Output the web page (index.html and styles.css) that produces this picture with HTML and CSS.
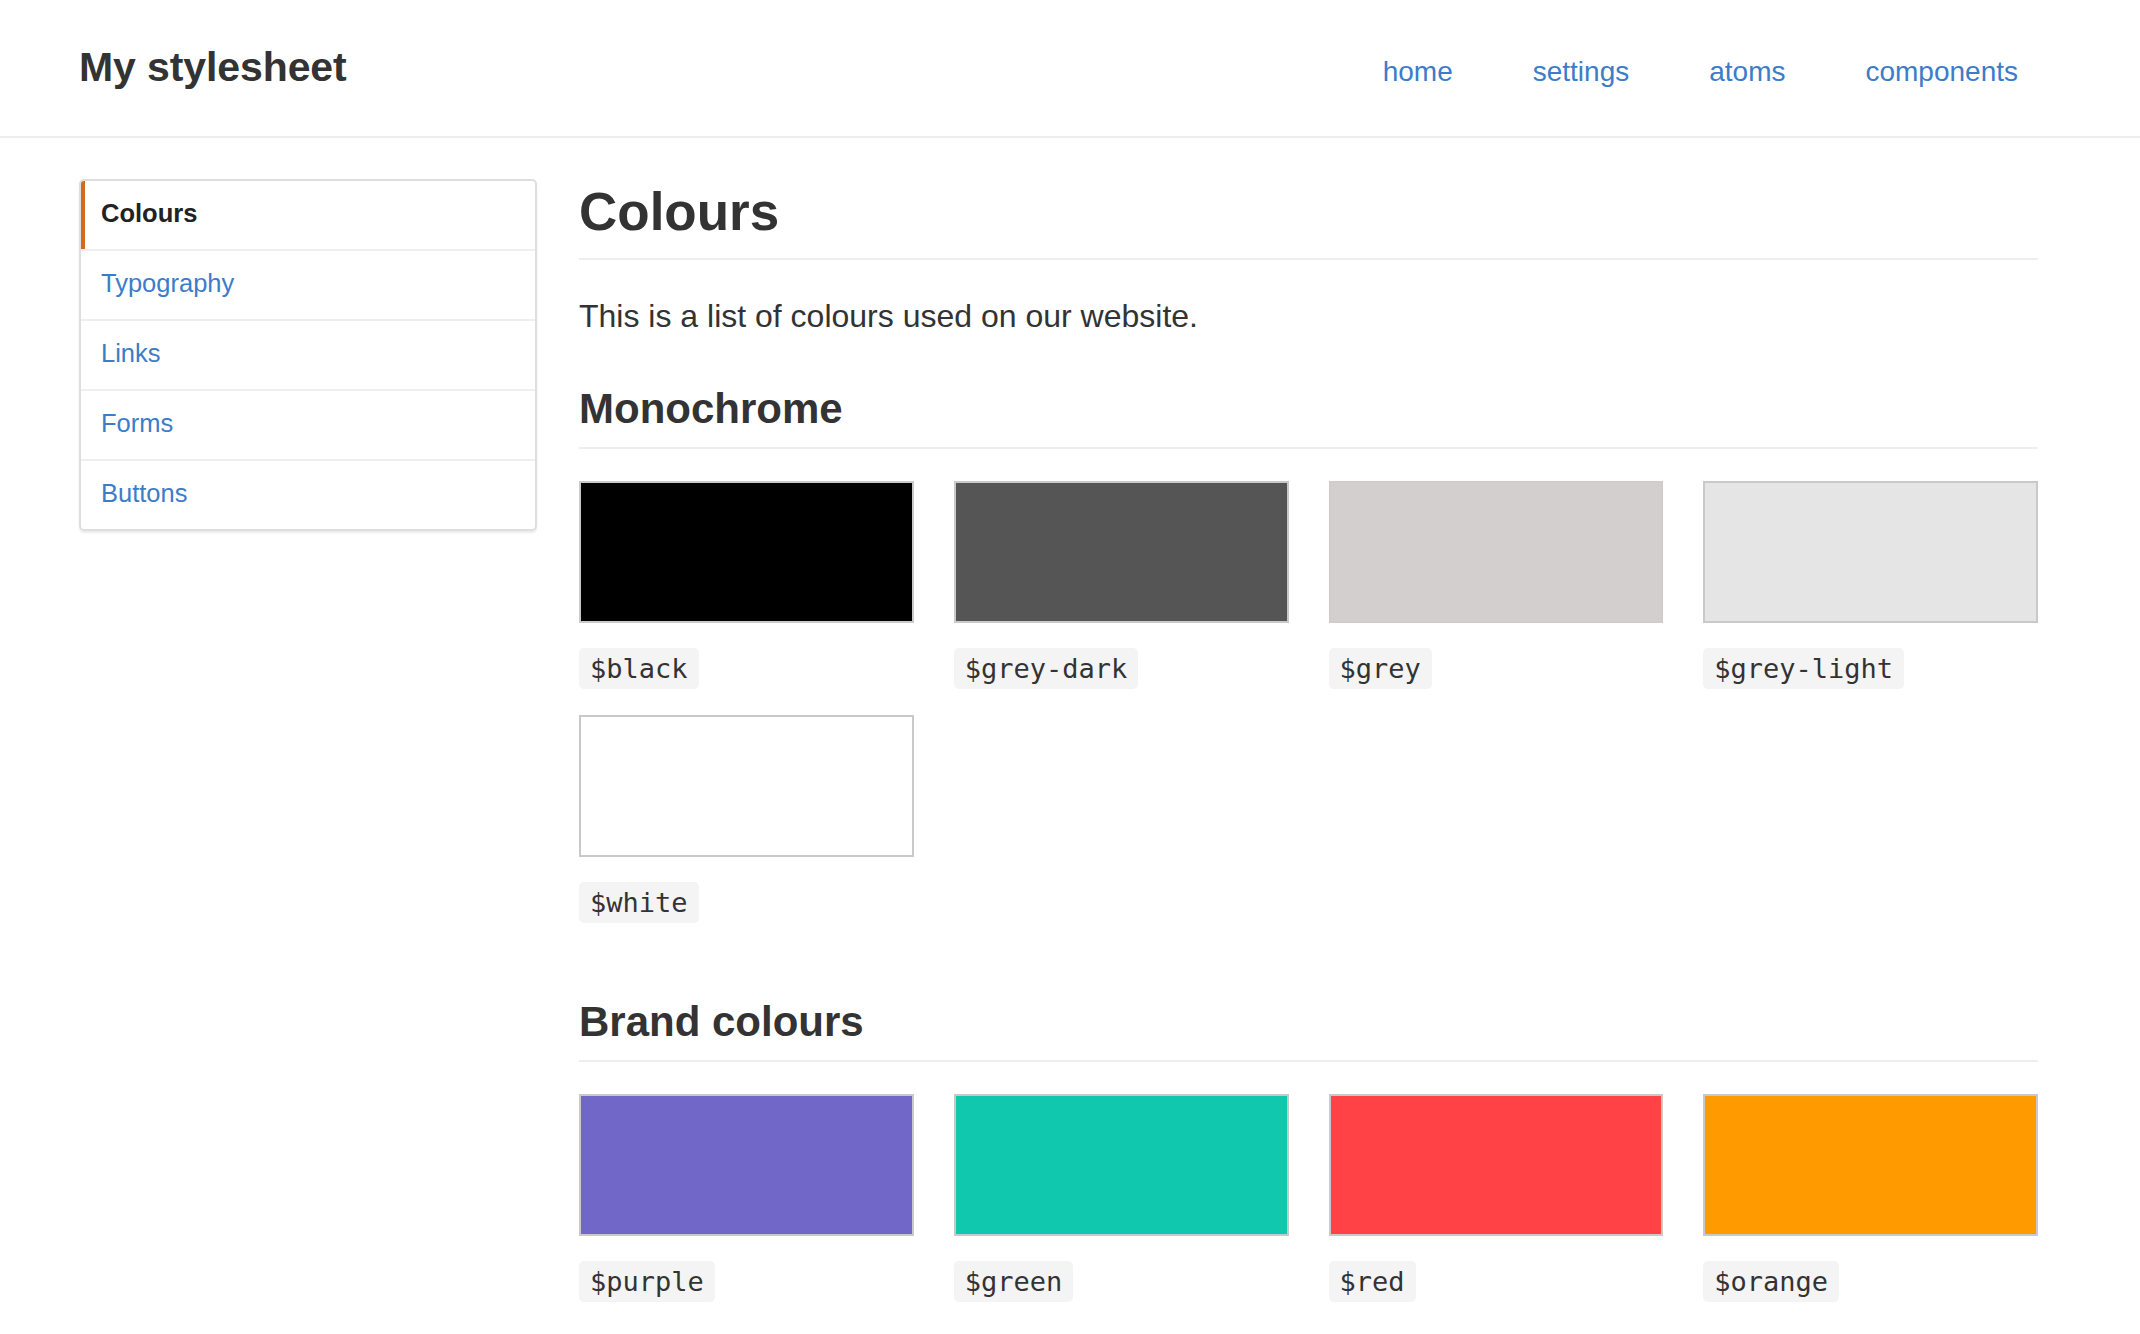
FILE: index.html
```html
<!DOCTYPE html>
<html lang="en">
<head>
<meta charset="utf-8">
<title>My stylesheet – Colours</title>
<link rel="stylesheet" href="styles.css">
</head>
<body>
<header class="site-header">
  <div class="logo">My stylesheet</div>
  <nav class="top-nav">
    <a href="#">home</a>
    <a href="#">settings</a>
    <a href="#">atoms</a>
    <a href="#">components</a>
  </nav>
</header>
<div class="layout">
  <aside class="sidebar">
    <a class="side-item active" href="#">Colours</a>
    <a class="side-item" href="#">Typography</a>
    <a class="side-item" href="#">Links</a>
    <a class="side-item" href="#">Forms</a>
    <a class="side-item" href="#">Buttons</a>
  </aside>
  <main class="content">
    <h1 class="page-title">Colours</h1>
    <p class="intro">This is a list of colours used on our website.</p>

    <section class="palette">
      <h2 class="section-title">Monochrome</h2>
      <div class="swatch-grid">
        <div class="swatch"><div class="chip c-black"></div><code class="name">$black</code></div>
        <div class="swatch"><div class="chip c-grey-dark"></div><code class="name">$grey-dark</code></div>
        <div class="swatch"><div class="chip c-grey"></div><code class="name">$grey</code></div>
        <div class="swatch"><div class="chip c-grey-light"></div><code class="name">$grey-light</code></div>
        <div class="swatch"><div class="chip c-white"></div><code class="name">$white</code></div>
      </div>
    </section>

    <section class="palette brand">
      <h2 class="section-title">Brand colours</h2>
      <div class="swatch-grid">
        <div class="swatch"><div class="chip c-purple"></div><code class="name">$purple</code></div>
        <div class="swatch"><div class="chip c-green"></div><code class="name">$green</code></div>
        <div class="swatch"><div class="chip c-red"></div><code class="name">$red</code></div>
        <div class="swatch"><div class="chip c-orange"></div><code class="name">$orange</code></div>
      </div>
    </section>
  </main>
</div>
</body>
</html>
```

FILE: styles.css
```css
html, body {
  margin: 0;
  padding: 0;
  background: #ffffff;
}

body {
  font-family: "Liberation Sans", Arial, Helvetica, sans-serif;
  color: #333333;
}

a {
  color: #3c7cc8;
  text-decoration: none;
}

/* Header */
.site-header {
  display: flex;
  justify-content: space-between;
  align-items: baseline;
  box-sizing: border-box;
  height: 138px;
  padding: 44px 122px 0 79px;
  border-bottom: 2px solid #eeeeee;
}

.logo {
  font-size: 41px;
  line-height: 46px;
  font-weight: 700;
  color: #333333;
  letter-spacing: -0.1px;
}

.top-nav {
  display: flex;
  gap: 80px;
  font-size: 28px;
}

/* Layout */
.layout {
  display: flex;
  align-items: flex-start;
  gap: 42px;
  padding: 41px 102px 40px 79px;
}

.sidebar {
  flex: 0 0 458px;
  box-sizing: border-box;
  display: flex;
  flex-direction: column;
  border: 2px solid #dedede;
  border-radius: 5px;
  box-shadow: 0 2px 2px rgba(0, 0, 0, 0.08);
  overflow: hidden;
}

.side-item {
  display: block;
  box-sizing: content-box;
  height: 64px;
  line-height: 64px;
  padding: 0 20px 4px;
  font-size: 25.5px;
  border-top: 2px solid #eeeeee;
}

.side-item:first-child {
  border-top: none;
}

.side-item.active {
  color: #222222;
  font-weight: 700;
  border-left: 4px solid #d2691e;
  padding-left: 16px;
}

/* Content */
.content {
  flex: 1 1 auto;
  min-width: 0;
}

.page-title {
  margin: 0;
  font-size: 53px;
  line-height: 66px;
  font-weight: 700;
  padding-bottom: 13px;
  border-bottom: 2px solid #eeeeee;
}

.intro {
  margin: 32px 0 0;
  font-size: 32px;
  line-height: 48px;
}

.palette {
  margin-top: 44px;
}

.palette.brand {
  margin-top: 74px;
}

.section-title {
  margin: 0;
  font-size: 42px;
  line-height: 50px;
  font-weight: 700;
  padding-bottom: 13px;
  border-bottom: 2px solid #eeeeee;
}

.swatch-grid {
  display: grid;
  grid-template-columns: repeat(4, 1fr);
  column-gap: 40px;
  row-gap: 26px;
  margin-top: 32px;
}

.swatch {
  display: flex;
  flex-direction: column;
  align-items: flex-start;
}

.chip {
  box-sizing: border-box;
  width: 100%;
  height: 142px;
  border: 2px solid #c9c9c9;
}

.name {
  margin-top: 25px;
  display: inline-block;
  height: 41px;
  line-height: 41px;
  padding: 0 11px;
  background: #f4f4f4;
  border-radius: 5px;
  font-family: "DejaVu Sans Mono", "Liberation Mono", monospace;
  font-size: 27px;
  color: #333333;
}

.c-black { background: #000000; }
.c-grey-dark { background: #555555; }
.c-grey { background: #d3cfce; border-color: #d0cccb; }
.c-grey-light { background: #e5e5e5; }
.c-white { background: #ffffff; }
.c-purple { background: #7067c8; }
.c-green { background: #10c8ae; }
.c-red { background: #ff4246; }
.c-orange { background: #ff9b00; }
```
